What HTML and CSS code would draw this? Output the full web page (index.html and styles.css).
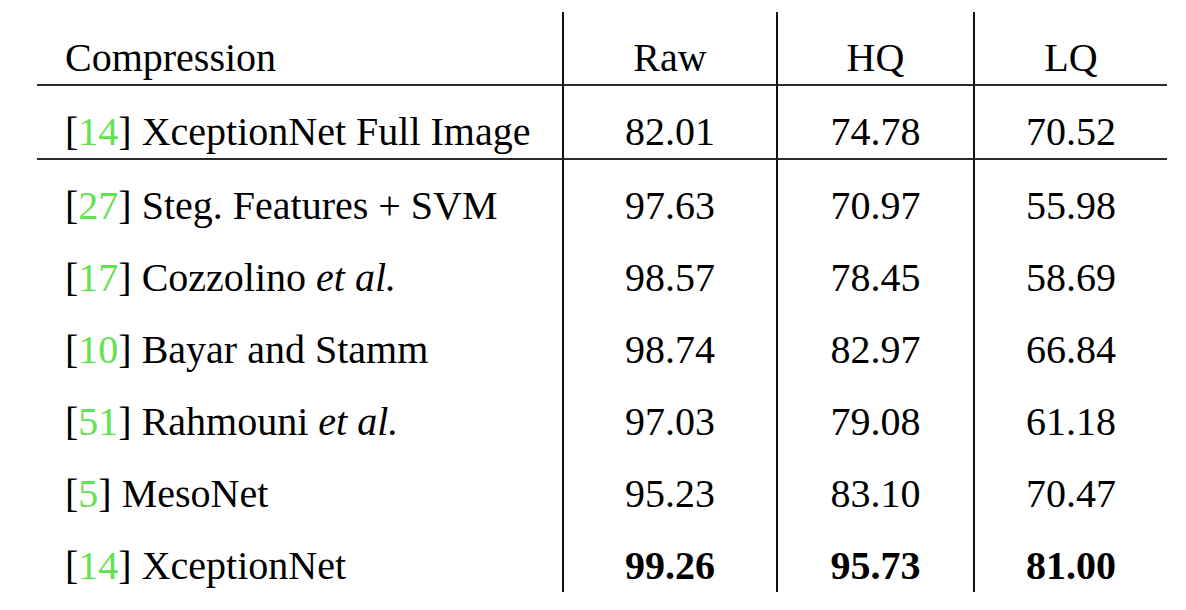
FILE: index.html
```html
<!DOCTYPE html>
<html lang="en">
<head>
	<meta charset="UTF-8">
	<title>Compression results</title>
	<link rel="stylesheet" href="styles.css">
</head>
<body>
	<table class="results">
		<colgroup>
			<col class="c-method">
			<col class="c-num">
			<col class="c-num2">
			<col class="c-num3">
		</colgroup>
		<tr class="head">
			<td class="method">Compression</td>
			<td>Raw</td>
			<td>HQ</td>
			<td>LQ</td>
		</tr>
		<tr class="full">
			<td class="method">[<span class="cite">14</span>] XceptionNet Full Image</td>
			<td>82.01</td>
			<td>74.78</td>
			<td>70.52</td>
		</tr>
		<tr>
			<td class="method">[<span class="cite">27</span>] Steg. Features + SVM</td>
			<td>97.63</td>
			<td>70.97</td>
			<td>55.98</td>
		</tr>
		<tr>
			<td class="method">[<span class="cite">17</span>] Cozzolino <i>et al.</i></td>
			<td>98.57</td>
			<td>78.45</td>
			<td>58.69</td>
		</tr>
		<tr>
			<td class="method">[<span class="cite">10</span>] Bayar and Stamm</td>
			<td>98.74</td>
			<td>82.97</td>
			<td>66.84</td>
		</tr>
		<tr>
			<td class="method">[<span class="cite">51</span>] Rahmouni <i>et al.</i></td>
			<td>97.03</td>
			<td>79.08</td>
			<td>61.18</td>
		</tr>
		<tr>
			<td class="method">[<span class="cite">5</span>] MesoNet</td>
			<td>95.23</td>
			<td>83.10</td>
			<td>70.47</td>
		</tr>
		<tr class="best">
			<td class="method">[<span class="cite">14</span>] XceptionNet</td>
			<td>99.26</td>
			<td>95.73</td>
			<td>81.00</td>
		</tr>
	</table>
</body>
</html>
```

FILE: styles.css
```css
body {
	margin: 0;
	background: #fff;
	color: #000;
	font-family: "Liberation Serif", "Times New Roman", serif;
}

/* table */
table.results {
	border-collapse: separate;
	border-spacing: 0;
	margin: 12px 0 0 37px;
	table-layout: fixed;
	width: 1130px;
	font-size: 40px;
}
table.results col.c-method { width: 525px; }
table.results col.c-num    { width: 214px; }
table.results col.c-num2   { width: 197px; }
table.results col.c-num3   { width: 194px; }

table.results td {
	border-left: 2px solid #111;
	line-height: 46px;
	padding: 23px 0 3px 0;
	text-align: center;
	vertical-align: top;
	white-space: nowrap;
}
table.results td.method {
	border-left: none;
	padding-left: 28px;
	text-align: left;
}
table.results tr.head td,
table.results tr.full td {
	border-bottom: 2px solid #2a2a2a;
}
table.results tr.best td {
	font-weight: bold;
}
table.results tr.best td.method {
	font-weight: normal;
}
span.cite {
	color: #5fe34f;
}
```
